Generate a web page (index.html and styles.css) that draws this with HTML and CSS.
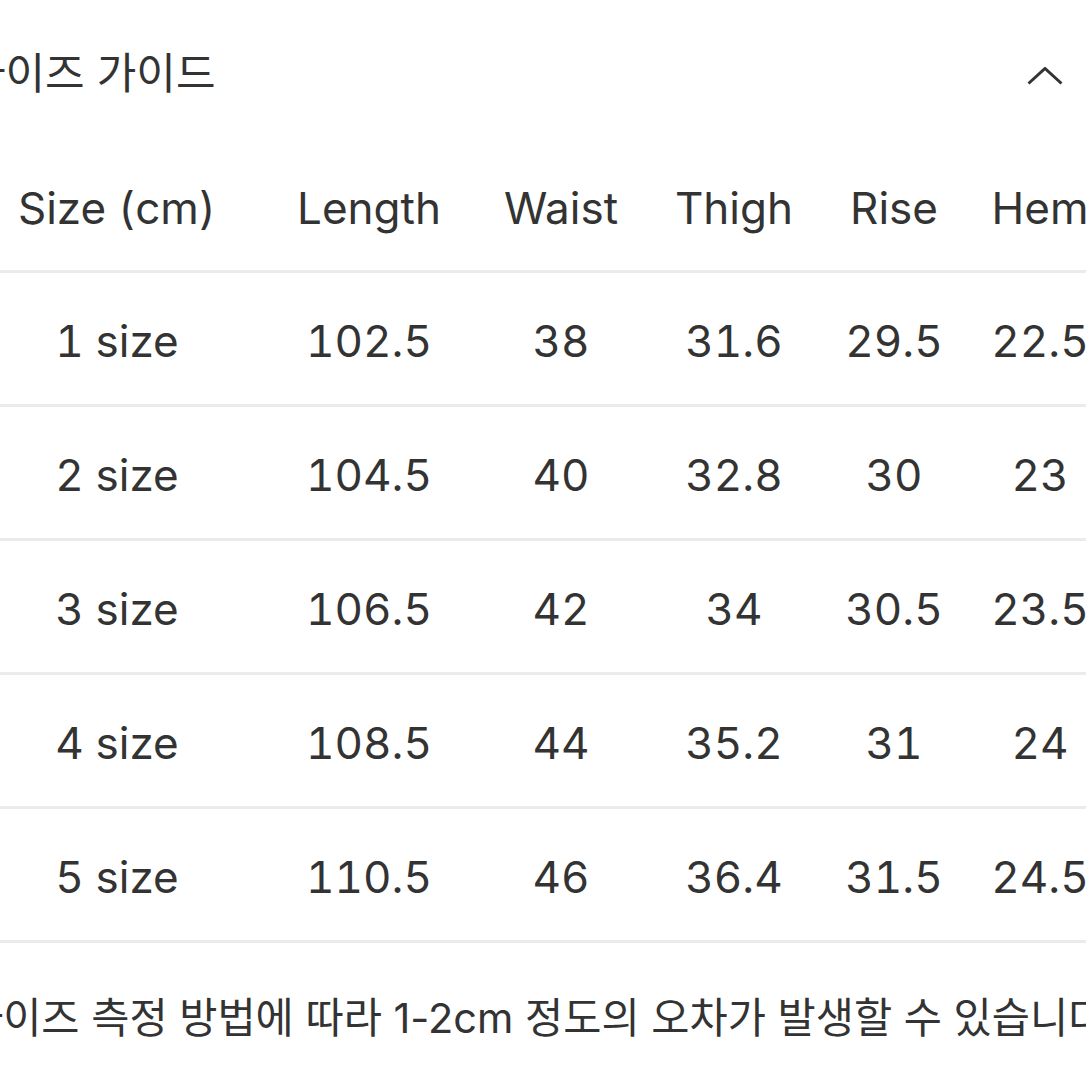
FILE: index.html
```html
<!DOCTYPE html>
<html lang="ko">
<head>
<meta charset="utf-8">
<title>사이즈 가이드</title>
<link rel="stylesheet" href="styles.css">
</head>
<body>
<div class="page">
  <div class="head">
    <h2 class="title">사이즈 가이드</h2>
    <svg class="chev" width="36" height="18" viewBox="0 0 36 18"><path d="M1.5 16.5 L18 1.5 L34.5 16.5" fill="none" stroke="#333" stroke-width="3"/></svg>
  </div>
  <div class="table">
    <div class="row hdr">
      <div class="c">Size (cm)</div><div class="c">Length</div><div class="c">Waist</div><div class="c">Thigh</div><div class="c">Rise</div><div class="c">Hem</div>
    </div>
    <div class="row">
      <div class="c">1 size</div><div class="c">102.5</div><div class="c">38</div><div class="c">31.6</div><div class="c">29.5</div><div class="c">22.5</div>
    </div>
    <div class="row">
      <div class="c">2 size</div><div class="c">104.5</div><div class="c">40</div><div class="c">32.8</div><div class="c">30</div><div class="c">23</div>
    </div>
    <div class="row">
      <div class="c">3 size</div><div class="c">106.5</div><div class="c">42</div><div class="c">34</div><div class="c">30.5</div><div class="c">23.5</div>
    </div>
    <div class="row">
      <div class="c">4 size</div><div class="c">108.5</div><div class="c">44</div><div class="c">35.2</div><div class="c">31</div><div class="c">24</div>
    </div>
    <div class="row">
      <div class="c">5 size</div><div class="c">110.5</div><div class="c">46</div><div class="c">36.4</div><div class="c">31.5</div><div class="c">24.5</div>
    </div>
  </div>
  <p class="note">사이즈 측정 방법에 따라 1-2cm 정도의 오차가 발생할 수 있습니다.</p>
</div>
</body>
</html>
```

FILE: styles.css
```css
html, body {
  margin: 0;
  padding: 0;
  background: #fff;
  overflow: hidden;
}
body {
  width: 1086px;
  height: 1086px;
  font-family: Inter, "Noto Sans CJK KR", sans-serif;
  color: #333;
}
.page {
  margin-left: -34px;
  width: 1200px;
}
.head {
  display: flex;
  align-items: center;
  justify-content: space-between;
  height: 146px;
  width: 1097px;
}
.title {
  margin: 0;
  font-weight: 400;
  font-size: 43px;
  line-height: 1;
}
.chev {
  display: block;
  margin-top: 5px;
}
.table {
  display: flex;
  flex-direction: column;
}
.row {
  display: grid;
  grid-template-columns: 302px 202px 182px 164px 156px 136px;
  height: 124px;
  border-bottom: 3px solid #ebebeb;
  align-items: center;
  font-size: 44px;
  box-sizing: content-box;
  font-feature-settings: "tnum" 1;
}
.row:not(.hdr) {
  padding-top: 4px;
  height: 127px;
}
.c {
  text-align: center;
  white-space: nowrap;
}
.note {
  margin: 0 0 0 -1px;
  height: 143px;
  display: flex;
  align-items: center;
  font-size: 41.5px;
  white-space: nowrap;
}
```
